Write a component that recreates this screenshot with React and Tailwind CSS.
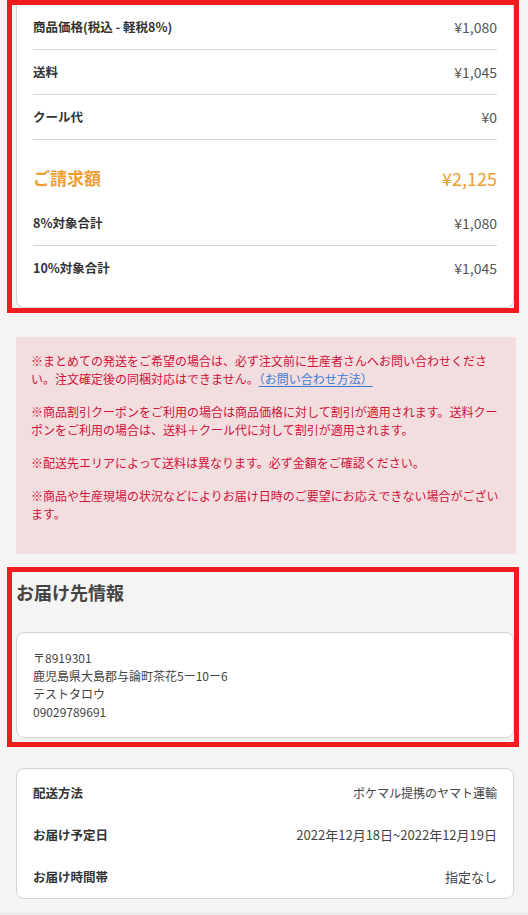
import React from "react";

const font = "font-['Noto_Sans_CJK_JP','Noto_Sans',sans-serif]";

function Row({ label, value, divider = true }) {
  return (
    <div
      className={`flex h-[45px] items-center justify-between ${
        divider ? "border-b border-[#d6d6d6]" : ""
      }`}
    >
      <span className="text-[12.5px] font-bold text-[#333]">{label}</span>
      <span className="text-[14px] text-[#555]">{value}</span>
    </div>
  );
}

function InfoRow({ label, value, size = "text-[13px]" }) {
  return (
    <div className="flex h-[42px] items-center justify-between">
      <span className="text-[12.5px] font-bold text-[#333]">{label}</span>
      <span className={`${size} text-[#444]`}>{value}</span>
    </div>
  );
}

export default function App() {
  return (
    <div className={`${font} min-h-[915px] w-[528px] bg-[#f4f4f4] pl-[7px]`}>
      {/* Price summary (annotated) */}
      <div className="w-[512px] border-[5px] border-[#ee1c1c] pl-[4px]">
        <div className="rounded-b-lg border border-t-0 border-[#d4d4d4] bg-white px-4 pb-4">
          <Row label="商品価格(税込 - 軽税8%)" value="¥1,080" />
          <Row label="送料" value="¥1,045" />
          <Row label="クール代" value="¥0" />
          <div className="flex items-center justify-between pb-[12px] pt-[27px] leading-[22px]">
            <span className="text-[17px] font-bold text-[#ef9d2e]">ご請求額</span>
            <span className="text-[18px] text-[#ef9d2e]">¥2,125</span>
          </div>
          <Row label="8%対象合計" value="¥1,080" />
          <Row label="10%対象合計" value="¥1,045" divider={false} />
        </div>
      </div>

      {/* Notes */}
      <div className="ml-[9px] mt-[24px] w-[500px] bg-[#f2dedf] px-[15px] pb-[31px] pt-[15px] text-[12px] leading-[18px] text-[#d0103a]">
        <p>
          ※まとめての発送をご希望の場合は、必ず注文前に生産者さんへお問い合わせください。注文確定後の同梱対応はできません。
          <a className="text-[#3a7bd5] underline underline-offset-2">（お問い合わせ方法）</a>
        </p>
        <p className="mt-[15px]">
          ※商品割引クーポンをご利用の場合は商品価格に対して割引が適用されます。送料クーポンをご利用の場合は、送料＋クール代に対して割引が適用されます。
        </p>
        <p className="mt-[15px]">
          ※配送先エリアによって送料は異なります。必ず金額をご確認ください。
        </p>
        <p className="mt-[15px]">
          ※商品や生産現場の状況などによりお届け日時のご要望にお応えできない場合がございます。
        </p>
      </div>

      {/* Delivery address (annotated) */}
      <div className="mt-[13px] w-[512px] border-[5px] border-[#ee1c1c] pb-[4px] pl-[4px] pt-[7px]">
        <h2 className="h-[27px] text-[18px] font-bold leading-[27px] text-[#444]">
          お届け先情報
        </h2>
        <div className="mt-[26px] rounded-lg border border-[#d4d4d4] bg-white p-4 text-[12px] leading-[18px] text-[#444]">
          <p>〒8919301</p>
          <p>鹿児島県大島郡与論町茶花5ー10ー6</p>
          <p>テストタロウ</p>
          <p>09029789691</p>
        </div>
      </div>

      {/* Delivery info */}
      <div className="ml-[9px] mt-[21px] w-[498px] rounded-lg border border-[#d4d4d4] bg-white px-4 pt-[3px]">
        <InfoRow label="配送方法" value="ポケマル提携のヤマト運輸" size="text-[12px]" />
        <InfoRow label="お届け予定日" value="2022年12月18日~2022年12月19日" />
        <InfoRow label="お届け時間帯" value="指定なし" />
      </div>

      <div className="-ml-[7px] mt-[14px] w-[528px] border-t border-[#e2e2e2]" />
    </div>
  );
}
